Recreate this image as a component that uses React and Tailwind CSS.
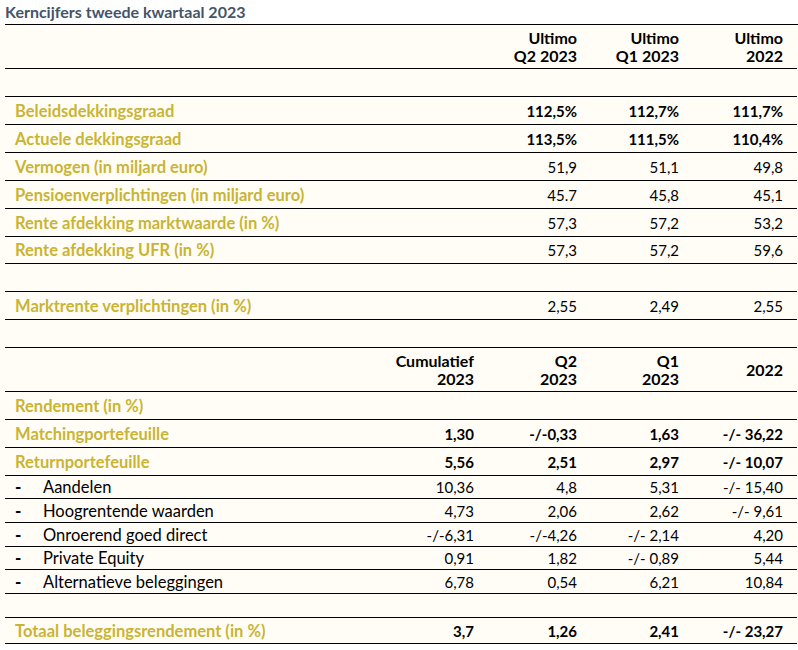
const GOLD = 'text-[#c9b434]';

const topRows = [
  { label: 'Beleidsdekkingsgraad', vals: ['', '112,5%', '112,7%', '111,7%'], boldVals: true, h: 'h-[28px]' },
  { label: 'Actuele dekkingsgraad', vals: ['', '113,5%', '111,5%', '110,4%'], boldVals: true, h: 'h-[28px]' },
  { label: 'Vermogen (in miljard euro)', vals: ['', '51,9', '51,1', '49,8'], h: 'h-[28px]' },
  { label: 'Pensioenverplichtingen (in miljard euro)', vals: ['', '45.7', '45,8', '45,1'], h: 'h-[28px]' },
  { label: 'Rente afdekking marktwaarde (in %)', vals: ['', '57,3', '57,2', '53,2'], h: 'h-[28px]' },
  { label: 'Rente afdekking UFR (in %)', vals: ['', '57,3', '57,2', '59,6'], h: 'h-[27px]' },
];

const subRows = [
  { label: 'Aandelen', vals: ['10,36', '4,8', '5,31', '-/- 15,40'], h: 'h-[23px]' },
  { label: 'Hoogrentende waarden', vals: ['4,73', '2,06', '2,62', '-/- 9,61'], h: 'h-[24px]' },
  { label: 'Onroerend goed direct', vals: ['-/-6,31', '-/-4,26', '-/- 2,14', '4,20'], h: 'h-[24px]' },
  { label: 'Private Equity', vals: ['0,91', '1,82', '-/- 0,89', '5,44'], h: 'h-[23px]' },
  { label: 'Alternatieve beleggingen', vals: ['6,78', '0,54', '6,21', '10,84'], h: 'h-[24px]' },
];

const Row = ({ h, children }) => (
  <div className={`grid grid-cols-[366px_103px_103px_102px_104px] items-center border-b border-black ${h}`}>
    {children}
  </div>
);

const GoldRow = ({ label, vals = ['', '', '', ''], boldVals, h = 'h-[28px]' }) => (
  <Row h={h}>
    <div className={`pl-[10px] text-[16.5px] font-bold ${GOLD}`}>{label}</div>
    {vals.map((v, i) => (
      <div key={i} className={`text-right ${boldVals ? 'font-bold' : ''}`}>{v}</div>
    ))}
  </Row>
);

const SubRow = ({ label, vals, h }) => (
  <Row h={h}>
    <div className="flex items-center pl-[10px] text-[16.5px]">
      <span className="w-[28px] text-[17px] font-black">-</span>
      <span>{label}</span>
    </div>
    {vals.map((v, i) => (
      <div key={i} className="text-right">{v}</div>
    ))}
  </Row>
);

const Empty = ({ h = 'h-[28px]' }) => <div className={`border-b border-black ${h}`} />;

const Head = ({ top, bottom }) => (
  <div className="text-right text-[16px] font-bold">
    {top ? <div>{top}</div> : null}
    <div>{bottom}</div>
  </div>
);

export default function App() {
  return (
    <div className="h-[650px] w-[798px] bg-white font-['Lato',sans-serif] text-[15px] leading-[18px] text-black">
      <div className="h-[25px] pl-[5px]">
        <div className="h-[25px] border-b border-black text-[16px] font-bold leading-[24px] text-[#44546a]">
          Kerncijfers tweede kwartaal 2023
        </div>
      </div>
      <div className="bg-[#fffdf6] pl-[5px] pr-[1px]">
        <Row h="h-[44px]">
          <div />
          <div />
          <Head top="Ultimo" bottom="Q2 2023" />
          <Head top="Ultimo" bottom="Q1 2023" />
          <Head top="Ultimo" bottom="2022" />
        </Row>
        <Empty />
        {topRows.map((r) => (
          <GoldRow key={r.label} {...r} />
        ))}
        <Empty />
        <GoldRow label="Marktrente verplichtingen (in %)" vals={['', '2,55', '2,49', '2,55']} />
        <Empty />
        <Row h="h-[44px]">
          <div />
          <Head top="Cumulatief" bottom="2023" />
          <Head top="Q2" bottom="2023" />
          <Head top="Q1" bottom="2023" />
          <Head bottom="2022" />
        </Row>
        <GoldRow label="Rendement (in %)" />
        <GoldRow label="Matchingportefeuille" vals={['1,30', '-/-0,33', '1,63', '-/- 36,22']} boldVals />
        <GoldRow label="Returnportefeuille" vals={['5,56', '2,51', '2,97', '-/- 10,07']} boldVals />
        {subRows.map((r) => (
          <SubRow key={r.label} {...r} />
        ))}
        <Empty h="h-[24px]" />
        <GoldRow label="Totaal beleggingsrendement (in %)" vals={['3,7', '1,26', '2,41', '-/- 23,27']} boldVals h="h-[26px]" />
      </div>
    </div>
  );
}
